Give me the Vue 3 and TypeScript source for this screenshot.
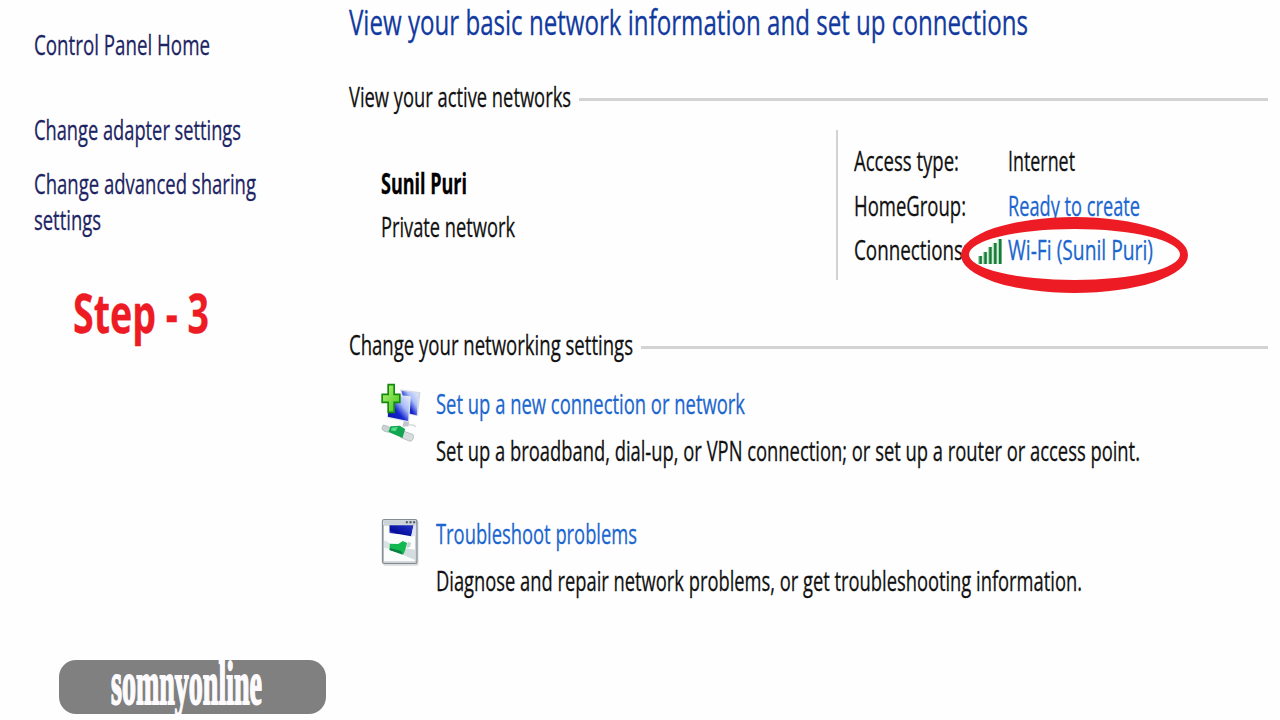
<template>
    <div class="network-center">
        <aside class="sidebar">
            <a v-fit="176" class="text side-link home">Control Panel Home</a>
            <a v-fit="207" class="text side-link adapter">Change adapter settings</a>
            <a class="side-link advanced">
                <span v-fit="222" class="text">Change advanced sharing</span>
                <span v-fit="67" class="text">settings</span>
            </a>
            <div v-fit="136" class="step">Step - 3</div>
            <div class="brand"><span v-fit="151">somnyonline</span></div>
        </aside>

        <main class="content">
            <h1 v-fit="679" class="title">View your basic network information and set up connections</h1>

            <div class="section-head">
                <span v-fit="222" class="text">View your active networks</span>
                <i class="rule"></i>
            </div>
            <section class="active-network">
                <div class="network-name">
                    <strong v-fit="86" class="text">Sunil Puri</strong>
                    <span v-fit="134" class="text">Private network</span>
                </div>
                <div class="details">
                    <div v-for="row in details" :key="row.label" class="detail-row">
                        <div class="label"><span v-fit="row.labelWidth" class="text">{{ row.label }}</span></div>
                        <svg v-if="row.signal" class="signal" width="26" height="28" viewBox="0 0 26 28">
                            <g v-for="(h, i) in bars" :key="i">
                                <rect :x="i * 4.9" :y="26 - h" width="4.4" :height="h" fill="#a6d9b4" />
                                <rect :x="1.4 + i * 4.9" :y="26 - h" width="2.4" :height="h" fill="#187a3a" />
                            </g>
                        </svg>
                        <span v-fit="row.valueWidth" class="text" :class="{ link: row.link }">{{ row.value }}</span>
                    </div>
                    <svg class="marker" width="230" height="80" viewBox="0 0 230 80">
                        <path
                            d="M2 40a113.5 38 0 1 0 227 0a113.5 38 0 1 0-227 0ZM10 39.5a105.5 25.5 0 1 1 211 0a105.5 25.5 0 1 1-211 0Z" />
                    </svg>
                </div>
            </section>

            <div class="section-head second">
                <span v-fit="284" class="text">Change your networking settings</span>
                <i class="rule"></i>
            </div>
            <section class="task">
                <svg class="task-icon" width="42" height="60" viewBox="45 40 125 180">
                    <defs>
                        <linearGradient id="screen" x1="0" y1="1" x2="1" y2="0">
                            <stop offset="0" stop-color="#0410a0" />
                            <stop offset=".4" stop-color="#1626d0" />
                            <stop offset=".65" stop-color="#a9bdf8" />
                            <stop offset="1" stop-color="#e9f0ff" />
                        </linearGradient>
                        <linearGradient id="plus" x1="0" y1="0" x2="1" y2="1">
                            <stop offset="0" stop-color="#b6f57a" />
                            <stop offset="1" stop-color="#43c51b" />
                        </linearGradient>
                    </defs>
                    <path d="M105 59 166 68 158 140 122 132Z" fill="#d5d9e4" />
                    <path d="M109 63 158 71 155 137 126 130Z" fill="url(#screen)" />
                    <path d="M70 73 137 80 132 158 66 145Z" fill="#dfe3ee" />
                    <path d="M72 76 133 83 129 154 68 141Z" fill="url(#screen)" />
                    <path d="M116 154 132 158 130 170 112 171Z" fill="#c3c5c9" />
                    <path d="M132 166q15-2 20 6" fill="none" stroke="#d0d2d4" stroke-width="4" />
                    <path d="M54 166q12 2 20 7l-4 15q-18-3-20-10Z" fill="#c9d3d3" stroke="#a4aeb0" stroke-width="2" />
                    <path d="M115 184 144 195q4 17-10 20l-28-12Z" fill="#d5dddd" stroke="#a2abad" stroke-width="2" />
                    <path d="M76 170 104 168 120 178 112 205 70 187Z" fill="#12a552" />
                    <path d="M80 174 98 172 91 185 77 182Z" fill="#54df8b" />
                    <path d="M69 45H87V74H104V98H87V128H69V98H51V74H69Z" fill="url(#plus)" stroke="#138a0b" stroke-width="5" />
                </svg>
                <div class="task-text">
                    <a v-fit="309" class="text link">Set up a new connection or network</a>
                    <span v-fit="704" class="text">Set up a broadband, dial-up, or VPN connection; or set up a router or access point.</span>
                </div>
            </section>
            <section class="task second-task">
                <svg class="task-icon" width="42" height="60" viewBox="45 40 125 180">
                    <defs>
                        <linearGradient id="bar" x1="0" y1="1" x2="1" y2="0">
                            <stop offset="0" stop-color="#8794e9" />
                            <stop offset=".3" stop-color="#020c9c" />
                            <stop offset="1" stop-color="#2636c4" />
                        </linearGradient>
                    </defs>
                    <rect x="54" y="62" width="106" height="136" rx="6" fill="#d9dbdd" />
                    <rect x="52" y="60" width="103" height="131" rx="5" fill="#fbfcfc" stroke="#858c92" stroke-width="4" />
                    <path d="M55 68H152" stroke="#cbd3d8" stroke-width="12" />
                    <path d="M122 68h6m5 0h6m5 0h6" stroke="#4b535b" stroke-width="6" />
                    <path d="M55 76H152V187H55Z" fill="none" stroke="#b4bcc1" stroke-width="3" />
                    <path d="M73 77H145L138 110Q103 103 73 100Z" fill="url(#bar)" />
                    <path d="M145 78 152 76V106L138 112Z" fill="#dfe3f7" />
                    <path d="M57 122q12 4 22 13l-6 12-17-3Z" fill="#dbe4e5" />
                    <path d="M116 146 151 150V182L110 164Z" fill="#d3dde0" />
                    <path d="M74 132 99 133 113 124 126 130 120 151 115 164 73 151Z" fill="#12b952" />
                    <path d="M75 145 108 154 113 165 73 151Z" fill="#078241" />
                    <path d="M128 126l10 4-4 12-10 3Z" fill="#c6d2d3" />
                </svg>
                <div class="task-text">
                    <a v-fit="201" class="text link">Troubleshoot problems</a>
                    <span v-fit="646" class="text">Diagnose and repair network problems, or get troubleshooting information.</span>
                </div>
            </section>
        </main>
    </div>
</template>

<script setup lang="ts">
    import type { Directive } from 'vue'

    interface DetailRow {
        label: string
        labelWidth: number
        value: string
        valueWidth: number
        link?: boolean
        signal?: boolean
    }

    const details: DetailRow[] = [
        { label: 'Access type:', labelWidth: 105, value: 'Internet', valueWidth: 67 },
        { label: 'HomeGroup:', labelWidth: 112, value: 'Ready to create', valueWidth: 132, link: true },
        { label: 'Connections:', labelWidth: 114, value: 'Wi-Fi (Sunil Puri)', valueWidth: 145, link: true, signal: true }
    ]

    const bars: number[] = [8, 12, 17, 21, 25]

    // squeezes a line of text horizontally to the given width
    const vFit: Directive<HTMLElement, number> = {
        mounted(el, binding) {
            const natural = el.getBoundingClientRect().width
            el.style.transform = `scaleX(${binding.value / natural})`
            el.style.marginRight = `${binding.value - natural}px`
        }
    }
</script>

<style>
    body {
        margin: 0;
        background: #fefefe;
        overflow: hidden;
    }
</style>

<style scoped>
    .network-center {
        display: flex;
        width: 1280px;
        height: 720px;
        overflow: hidden;
        background: #fefefe;
        color: #111;
        font-family: "Open Sans", "Noto Sans", sans-serif;
        font-size: 28px;
        line-height: 36px;
        -webkit-text-stroke-width: .3px;
    }

    .text,
    .title,
    .step,
    .brand span {
        display: block;
        width: max-content;
        flex-shrink: 0;
        white-space: nowrap;
        transform-origin: 0 50%;
    }

    .sidebar {
        box-sizing: border-box;
        width: 349px;
        flex-shrink: 0;
        padding: 26px 0 0 34px;
    }

    .side-link {
        color: #1d2463;
    }

    .adapter {
        margin-top: 49px;
    }

    .advanced {
        display: block;
        margin-top: 18px;
    }

    .step {
        margin: 45px 0 0 39px;
        color: #ed1c24;
        font-size: 54px;
        font-weight: 700;
        line-height: 60px;
    }

    .brand {
        box-sizing: border-box;
        width: 267px;
        height: 54px;
        margin: 318px 0 0 25px;
        padding-left: 52px;
        border-radius: 17px;
        background: #808080;
        color: #fdfbfd;
        font-family: "Liberation Serif", serif;
        font-size: 62px;
        font-weight: 700;
        line-height: 46px;
        -webkit-text-stroke-width: 2px;
    }

    .content {
        flex: 1;
        min-width: 0;
    }

    .title {
        margin: 0;
        color: #123a9f;
        font-size: 35px;
        font-weight: 400;
        line-height: 44px;
    }

    .section-head {
        display: flex;
        align-items: center;
        margin: 34px 12px 0 0;
    }

    .section-head.second {
        margin-top: 46px;
    }

    .rule {
        flex: 1;
        height: 3px;
        margin: 7px 0 0 8px;
        background: #d3d3d3;
    }

    .active-network {
        display: flex;
        height: 150px;
        margin-top: 16px;
    }

    .network-name {
        box-sizing: border-box;
        width: 487px;
        padding: 35px 0 0 32px;
        flex-shrink: 0;
    }

    .network-name .text + .text {
        margin-top: 7px;
    }

    .network-name strong {
        color: #000;
    }

    .details {
        position: relative;
        flex: 1;
        padding: 12px 0 0 16px;
        border-left: 2px solid #d3d3d3;
    }

    .detail-row {
        display: flex;
        height: 44.5px;
    }

    .label {
        width: 154px;
        flex-shrink: 0;
    }

    .signal {
        margin: 7px 4px 0 -30px;
        flex-shrink: 0;
    }

    .link {
        color: #1b66cf;
    }

    .marker {
        position: absolute;
        left: 121px;
        top: 85px;
    }

    .marker path {
        fill: #ed1c24;
        fill-rule: evenodd;
    }

    .task {
        display: flex;
        margin-top: 23px;
        padding-left: 31px;
    }

    .task.second-task {
        margin-top: 47px;
    }

    .task-icon {
        height: 60px;
        margin: -2px 14px 0 0;
        flex-shrink: 0;
    }

    .task-text .text + .text {
        margin-top: 11px;
    }
</style>
